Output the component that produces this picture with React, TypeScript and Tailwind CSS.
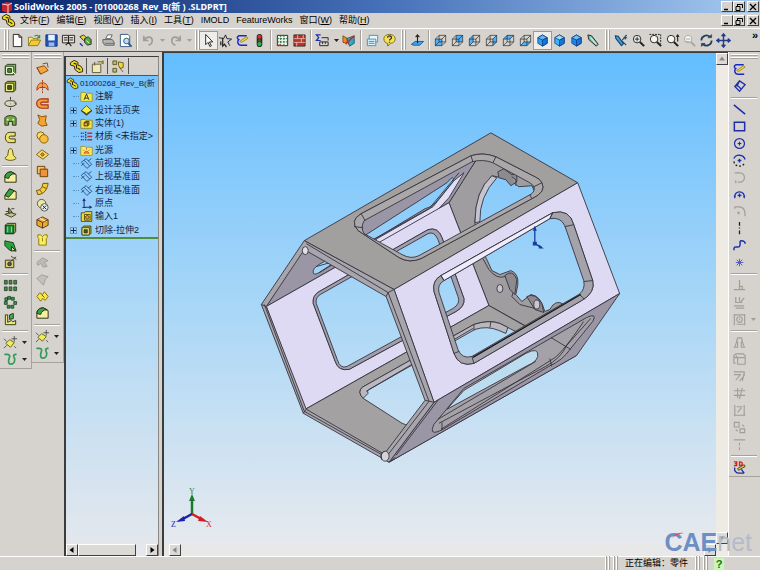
import React from 'react'

interface IconProps {
  name: string
}

interface ToolButtonProps {
  name: string
  pressed?: boolean
}

interface TreeItem {
  label: string
  icon: string
  expandable?: boolean
}

const B = '#1c2fa8'
const K = '#222222'
const G = '#a19e98'

// Wire cube shared by the standard view icons
const Cube = ({ face }: { face: string }) => (
  <g stroke="#222" fill="none">
    <path d={face} fill="#4db2ff" stroke="none" />
    <path d="M2.5 6.5h7v7h-7zM6.5 2.5h7v7h-7zM2.5 6.5l4-4M9.5 6.5l4-4M9.5 13.5l4-4M2.5 13.5l4-4" strokeWidth=".7" />
  </g>
)

const Solid = ({ top, front }: { top: string; front: string }) => (
  <g stroke="#123c7c" strokeWidth=".8">
    <path d="M3 5l5-3 5 3v6l-5 3-5-3z" fill={front} />
    <path d="M3 5l5-3 5 3-5 2.500z" fill={top} />
    <path d="M8 7.500l5-2.500v6l-5 3z" fill="#1576d8" />
  </g>
)

const Lens = ({ color = K, children }: { color?: string; children?: React.ReactNode }) => (
  <g fill="none" stroke={color}>
    <circle cx="6.500" cy="6.500" r="4" fill="#f4f6f6" />
    <path d="M9.500 9.500l4.500 4.500" strokeWidth="2.200" />
    {children}
  </g>
)

const ICONS: Record<string, React.ReactNode> = {
  new: <path d="M3.500 1.500h6l3 3v10h-9zM9.500 1.500v3h3" fill="#fff" stroke={K} />,
  open: (
    <g stroke="#7a6a10" strokeWidth=".8">
      <path d="M1.500 13.500v-9h4l1 1.500h5v2" fill="#f5e87a" />
      <path d="M1.500 13.500l3-6h10l-3 6z" fill="#f6c92e" />
      <path d="M8 3.500c2-2 4-1 5 1M13.500 2v3h-3" fill="none" stroke="#2d9a2d" strokeWidth="1.200" />
    </g>
  ),
  save: (
    <g>
      <path d="M2 2h12v12H2z" fill="#1d55b8" stroke="#133a80" />
      <path d="M4.500 2h7v6h-7z" fill="#e8f1ff" />
      <path d="M5 10h6v4H5z" fill="#9db8e0" />
    </g>
  ),
  drawing: (
    <g fill="none" stroke={K}>
      <path d="M1.500 2.500h13v8h-13z" fill="#e9e6df" />
      <path d="M3 5h4M9 5h4M3 7.500h4M9 7.500h4M8 3v7M5 13l3-3 3 4" strokeWidth="1.200" />
    </g>
  ),
  assembly: (
    <g stroke={K} strokeWidth=".9">
      <path d="M2 4l4-2 3 3-3 3z" fill="#e8d336" />
      <path d="M7 6l4-2 3 3v5l-4 1-3-3z" fill="#4fae3e" />
      <path d="M9 8l3 3" stroke="#fff" />
      <path d="M2 11l3 3" stroke={B} strokeWidth="1.500" />
    </g>
  ),
  print: (
    <g stroke="#555" strokeWidth=".9">
      <path d="M5 6l2-4h5l-2 4z" fill="#fff" />
      <path d="M2 7h10l2 3v3H4l-2-3z" fill="#b8b9b5" />
      <path d="M4 11h10" stroke="#3d6fa8" />
    </g>
  ),
  preview: (
    <g stroke="#355a80">
      <path d="M2.500 1.500h8l2 2v11h-10z" fill="#fff" />
      <circle cx="9" cy="8.500" r="3" fill="#b8e0f0" />
      <path d="M11 11l3.500 3.500" strokeWidth="2" />
    </g>
  ),
  undo: <path d="M3 3v5h5M3.500 7.500C6 3 12 3.500 12 8c0 3-2 4.500-4 5" fill="none" stroke={G} strokeWidth="1.800" />,
  redo: <path d="M13 3v5H8M12.500 7.500C10 3 4 3.500 4 8c0 3 2 4.500 4 5" fill="none" stroke={G} strokeWidth="1.800" />,
  pointer: <path d="M5 1.500v11l2.500-2.500 2 4.500 1.500-.8-2-4.200h3.500z" fill="#fff" stroke={K} />,
  selectOther: (
    <g fill="none" stroke={K}>
      <path d="M1 5l5 1 2-4 1.500 4 5 .5-4 3 2 4" />
      <path d="M5 5v9l2-2 2 3M3 9v4" strokeWidth="1.300" />
    </g>
  ),
  sketch: (
    <g fill="none" strokeWidth="1.600">
      <path d="M12.500 3H4c-2 1-2 3 0 4-2 2-1 6 2 6h7" stroke="#1b28c8" />
      <path d="M5 9l7-5 2 1.500-7 4.500z" fill="#f1d73b" stroke="#8d7614" strokeWidth=".8" />
    </g>
  ),
  traffic: (
    <g>
      <rect x="5" y="1" width="6" height="14" rx="3" fill="#2a2a2a" />
      <circle cx="8" cy="4" r="2.200" fill="#e02b22" />
      <circle cx="8" cy="8" r="1.300" fill="#5b5b30" />
      <circle cx="8" cy="11.800" r="2.200" fill="#27b54a" />
    </g>
  ),
  grid: (
    <g stroke="#27734b" fill="none">
      <path d="M2.500 2.500h11v11h-11z" fill="#eef1e8" stroke={K} />
      <path d="M2.500 6h11M2.500 9.500h11M6 2.500v11M9.500 2.500v11" strokeDasharray="2 1" />
      <path d="M3 13h3" stroke="#d22" strokeWidth="1.500" />
    </g>
  ),
  table: (
    <g>
      <path d="M2 2h12v12H2z" fill="#b7372e" stroke={K} strokeWidth=".8" />
      <path d="M2 6h12M2 10h12M6 2v4M10 6v4M5 10v4M12 2v4" stroke="#e5b0a2" />
    </g>
  ),
  measure: (
    <g fill="none" stroke={K}>
      <path d="M6 2H1.500l2.500 3-2.500 3H6" stroke={B} strokeWidth="1.300" />
      <path d="M5 9.500h9v4H5zM8 9.500v2M11 9.500v2M7 5h7v3" />
    </g>
  ),
  wizard: (
    <g strokeWidth=".9">
      <path d="M1 3l5 3-1 5-4-1z" fill="#f08b24" stroke="#84420b" />
      <path d="M5 6l8-3v8l-5 3z" fill="#34a8c4" stroke="#134f68" />
      <path d="M4 12l9-9" stroke="#d12222" strokeWidth="1.500" />
    </g>
  ),
  sheet: (
    <g stroke="#4b8db4">
      <path d="M4.500 2.500h9v7h-9z" fill="#eaf7ff" />
      <path d="M2.500 6.500h9v7h-9z" fill="#d8f0fa" />
      <path d="M4 9h6M4 11h6" />
    </g>
  ),
  help: (
    <g>
      <path d="M2 6c0-6 12-6 12 0 0 4-3 5-5 5l-3 3v-3c-2 0-4-2-4-5z" fill="#f5e356" stroke="#7c6a1c" />
      <path d="M6 5c0-3 5-2 4 .5C9.500 6.500 8 6.500 8 8M8 9.200v1.300" fill="none" stroke="#333" strokeWidth="1.400" />
    </g>
  ),
  normal: (
    <g fill="none">
      <path d="M1.500 12l4-3h9l-4 4h-7z" fill="#3fa3ee" stroke="#185f9d" />
      <path d="M8 11V2M6 4.500L8 2l2 2.500" stroke={K} strokeWidth="1.200" />
    </g>
  ),
  front: <Cube face="M2.500 6.500h7v7h-7z" />,
  back: <Cube face="M6.500 2.500h7v7h-7z" />,
  left: <Cube face="M2.500 6.500l4-4v7l-4 4z" />,
  right: <Cube face="M9.500 6.500l4-4v7l-4 4z" />,
  top: <Cube face="M2.500 6.500l4-4h7l-4 4z" />,
  bottom: <Cube face="M2.500 13.500l4-4h7l-4 4z" />,
  iso: <Solid top="#5bb8ff" front="#2d9df6" />,
  trimetric: <Solid top="#9adcff" front="#3db4f7" />,
  dimetric: <Solid top="#62c2ff" front="#1b86e8" />,
  section: (
    <g fill="none" stroke={K}>
      <path d="M2 2l4 1 7 9-2 2-8-7z" fill="#7fc4b0" />
      <path d="M5 5l6 7" stroke="#fff" />
    </g>
  ),
  viewSpec: (
    <g fill="none" stroke="#12466e" strokeWidth="1.200">
      <path d="M1.500 3l3 .5 5.500 8-2 2L2 6z" fill="#4d9bd0" />
      <path d="M13.500 2L8.500 8M10 5h4M12 3v4M9 9l4 4" />
    </g>
  ),
  zoomFit: <Lens><path d="M6.500 4v5M4 6.500h5" /></Lens>,
  zoomArea: <Lens><path d="M1.500 1.500h12v10" strokeDasharray="2 1" /></Lens>,
  zoomInOut: <Lens><path d="M13.500 2v7M12 4l1.500-2L15 4" strokeWidth="1.200" /></Lens>,
  zoomSel: <Lens color="#aaa7a1"><path d="M4 6.500h5M3 9h5" /></Lens>,
  rotate: (
    <g fill="none" stroke="#27405c" strokeWidth="1.900">
      <path d="M2.500 8c0-5 6-7 9-4M13.500 8c0 5-6 7-9 4" />
      <path d="M9.500 5h4V1.500zM6.500 11h-4v3.500z" fill="#27405c" strokeWidth=".5" />
    </g>
  ),
  pan: <path d="M8 1v14M1 8h14M6 3.500L8 1l2 2.500M6 12.500L8 15l2-2.500M3.500 6L1 8l2.500 2M12.500 6L15 8l-2.500 2" fill="none" stroke="#223c88" strokeWidth="1.500" />,

  // features
  extrude: (
    <g stroke="#26351a">
      <path d="M2.500 4.500l2-2h9v9l-2 2h-9z" fill="#8fca72" />
      <path d="M2.500 4.500h9v9h-9z" fill="#e7ecc0" />
      <path d="M5 7h4v4H5z" fill="#2fa043" />
      <path d="M10 10l3 3" stroke="#fff" />
    </g>
  ),
  cut: (
    <g stroke="#3a3510">
      <path d="M2.500 4.500l2-2h9v9l-2 2h-9z" fill="#9fb34c" />
      <path d="M2.500 4.500h9v9h-9z" fill="#efe98a" />
      <path d="M5 7h4v4H5z" fill="#3b5a1c" />
    </g>
  ),
  revolve: (
    <g fill="none" stroke="#333">
      <path d="M8 1v14" strokeDasharray="3 1" />
      <path d="M2 9c0-4 3-4 6-4s6 0 6 4l-2-2M14 9c-3 3-9 3-12 0" fill="#dcd9b4" />
    </g>
  ),
  revCut: (
    <g stroke="#26351a">
      <path d="M2 5c2-3 10-3 12 0v8h-4V9H6v4H2z" fill="#6fa549" />
      <path d="M4 7h2M10 7h2" stroke="#f6ee8c" strokeWidth="2" />
    </g>
  ),
  sweep: <path d="M13 2.500H7c-6 0-6 11 0 11h6v-4H8c-2 0-2-3 0-3h5z" fill="#efe469" stroke="#3a3510" />,
  loft: <path d="M6 3c1-1.500 3-1.500 4 0l1 6 3 3c-2 3-10 3-12 0l3-3z" fill="#f1e96c" stroke="#5a5210" />,
  fillet: (
    <g stroke="#2b2a10">
      <path d="M2 8c0-4 3-6 7-6l5 3v8H2z" fill="#f4f0a0" />
      <path d="M2 8c0-4 3-6 7-6l4 2c-4 0-6 2-7 5z" fill="#36a54a" />
    </g>
  ),
  chamfer: (
    <g stroke="#2b2a10">
      <path d="M2 9l5-7 7 3v8H2z" fill="#f4f0a0" />
      <path d="M2 9l5-7 5 2-6 7z" fill="#36a54a" />
    </g>
  ),
  rib: (
    <g stroke="#3a3a2a">
      <path d="M2 11l6-2 6 2-5 3z" fill="#c9c58c" />
      <path d="M6 10V4l4 5z" fill="#7ba657" />
      <path d="M3 8h3M9 5h3" />
    </g>
  ),
  shell: (
    <g stroke="#173b1d">
      <path d="M2.500 4.500l2-2h9v9l-2 2h-9z" fill="#a9c36a" />
      <path d="M2.500 4.500h9v9h-9z" fill="#1f8a3c" />
      <path d="M5 6v6M9 6v6" stroke="#a6dc7c" />
    </g>
  ),
  draft: (
    <g stroke="#173b1d">
      <path d="M2 3l9 2 3 9-7-1-5-5z" fill="#27a344" />
      <path d="M9 9l4 4-4 1z" fill="#f3ca8a" />
    </g>
  ),
  hole: (
    <g stroke="#3c3a1a">
      <path d="M2.500 5.500h9v8h-9z" fill="#d9cf7c" />
      <circle cx="7" cy="9.500" r="2" fill="#555" />
      <path d="M8 7l6-5M11 2l3 3M9 1l1 2" />
    </g>
  ),
  pattern: (
    <g fill="#4f8a4c" stroke="#1c3c1c" strokeWidth=".8">
      <path d="M1.500 2.500h3v4h-3zM6.500 2.500h3v4h-3zM11.500 2.500h3v4h-3zM1.500 9.500h3v4h-3zM6.500 9.500h3v4h-3zM11.500 9.500h3v4h-3z" />
    </g>
  ),
  circular: (
    <g fill="#3c9950" stroke="#173b1d" strokeWidth=".8">
      <path d="M5 1.500h3v3H5zM9 2.500h3v3H9zM11.500 7h3v3h-3zM8.500 11h3v3h-3zM4.500 11h3v3h-3zM1.500 7h3v3h-3zM2 3h3v3H2z" />
    </g>
  ),
  mirror: (
    <g stroke="#2c3a17">
      <path d="M2.500 3v10.500h11V9l-3 1.500L9 9l-4 2V3z" fill="#f0e47a" />
      <path d="M7 8V3l4-1.500V7z" fill="#3fae5a" />
    </g>
  ),
  refGeom: (
    <g stroke="#5a5a10" strokeWidth=".9">
      <path d="M3 9l4-4 5 3-4 5z" fill="#f1ee55" />
      <path d="M1 4l3 3M1 14l3-3M12 12l2 2M12 1v6M9 4h6" stroke="#444" />
    </g>
  ),
  curve: <path d="M1.500 2.500h3c3 0 3 2 2 4.500s-1 6 2 6 4-3 4-5-2-3-1-4.500 2-1 3-1" fill="none" stroke="#2f9a5a" strokeWidth="1.800" />,
  surfExtrude: (
    <g stroke="#8a4a0a">
      <path d="M2 6l8-2 4 5-8 4z" fill="#f6a63c" />
      <path d="M8 2l5-1 1 5M2 6l4 7" fill="none" />
    </g>
  ),
  surfRevolve: (
    <g stroke="#a3340c">
      <path d="M2 12C2 6 5 4 8 4s6 2 6 8l-3-3H5z" fill="#f7a24c" />
      <path d="M8 1v14" strokeDasharray="2 1" />
    </g>
  ),
  surfSweep: <path d="M14 3H7C0 3 0 13 7 13h7v-3.500H8c-2.500 0-2.500-3 0-3h6z" fill="#f6a03c" stroke="#a82c10" strokeWidth="1.200" />,
  surfLoft: <path d="M3 2l4 2 5-1-1 6 2 4-6 1-4-3 2-4z" fill="#f5a52a" stroke="#8d4c0b" />,
  surfOffset: (
    <g stroke="#8a5c0a">
      <circle cx="6" cy="6" r="4" fill="#f9dd6a" />
      <circle cx="9.500" cy="9.500" r="4.500" fill="#f7bf3e" />
    </g>
  ),
  surfPlanar: (
    <g stroke="#7c5c12">
      <path d="M1.500 8l6-5 7 5-6 5z" fill="#f3e066" />
      <path d="M6 8l2-2 2 2-2 2z" fill="#e07e20" />
    </g>
  ),
  surfKnit: (
    <g stroke="#6d3d08">
      <path d="M2.500 2.500h8v8h-8z" fill="#f6c66c" />
      <path d="M5.500 5.500h8v8h-8z" fill="#ee9438" />
    </g>
  ),
  surfExtend: <path d="M1.500 10c4 0 6-2 7-7.500h5.500C13 9 10 14 3 14.500zM5 9.500l2.500 3M8 6l4 2" fill="#f2cf3e" stroke="#6d4d08" />,
  surfTrim: (
    <g stroke="#555">
      <circle cx="7" cy="6" r="4.500" fill="#f0e9a0" />
      <circle cx="10" cy="10" r="4" fill="#e8efe8" />
      <path d="M8 8l4 4M12 8l-4 4" stroke={K} />
    </g>
  ),
  surfBox: (
    <g stroke="#5b3d08">
      <path d="M2 5l6-3 6 3v6l-6 3-6-3z" fill="#e9a934" />
      <path d="M2 5l6 3 6-3M8 8v6" fill="none" />
      <path d="M5 3.500l6 3" stroke="#fff" />
    </g>
  ),
  surfThick: <path d="M3 3h3l2 2 2-2h3v3l-1 1v7H4V7L3 6zM8 6v4" fill="#f8ef5a" stroke="#8d7a10" />,
  fill: <path d="M2 8l6-5 6 3-4 2 3 4-4 1-3-4-3 2z" fill="#bdbab4" stroke={G} />,
  mid: <path d="M2 7l5-4 7 2-3 3-2 6-4-4z" fill="#c3c0ba" stroke={G} />,
  freeform: (
    <g stroke="#86700b">
      <path d="M2 8l3-4 3 2 2-3 4 5-3 4-3-2-2 3z" fill="#f6e945" />
      <path d="M7 6l3 3" stroke="#c21" />
    </g>
  ),

  // sketch tools
  dimension: (
    <g fill="none" stroke={B} strokeWidth="1.400">
      <path d="M8 2l6 4-6 7-5-5zM5 6l5 5M8 2L5 8" />
    </g>
  ),
  line: <path d="M2 3l12 10" stroke={B} strokeWidth="1.600" />,
  rect: <path d="M2.500 3.500h11v9h-11z" fill="none" stroke={B} strokeWidth="1.600" />,
  circle: (
    <g fill="none" stroke={B} strokeWidth="1.300">
      <circle cx="8" cy="8" r="5.300" />
      <path d="M8 6v4M6 8h4" />
    </g>
  ),
  arc: (
    <g fill="none" stroke={K} strokeWidth="1.400">
      <path d="M2 6c2-5 10-5 12 1" stroke={B} />
      <path d="M2 9c1 6 9 7 12 1" strokeDasharray="2 2" />
      <path d="M8 6v4M6 8h4" stroke={B} />
    </g>
  ),
  tangentArc: <path d="M3 3h5c7 0 7 10 0 10H6M4 11v3" fill="none" stroke={G} strokeWidth="1.300" />,
  threeArc: <path d="M3 12C1 3 15 3 13 12M8 7v4M6 9h4M2 10h2M12 10h2" fill="none" stroke={B} strokeWidth="1.400" />,
  fillet2: <path d="M3 3h4c6 0 7 4 7 10M3 3v2M7 8v3M5.500 9.500h3" fill="none" stroke={G} strokeWidth="1.300" />,
  center: <path d="M8 1v14" stroke={K} strokeWidth="1.400" strokeDasharray="4 2 1 2" />,
  spline: <path d="M2 13c0-6 4-2 6-4s-1-6 2-6 4 2 4 3" fill="none" stroke={B} strokeWidth="1.600" />,
  point: <path d="M8 4v8M4 8h8M5 5l6 6M11 5l-6 6" stroke="#4a55d8" />,
  perp: <path d="M8 2v10M2 12.500h12M8 9h3v3" fill="none" stroke={G} strokeWidth="1.300" />,
  relation: <path d="M4 2v6h7M8 2v5M13 3l-4 5M2 11.500h11M4 14h9" fill="none" stroke={G} strokeWidth="1.300" />,
  convert: (
    <g fill="none" stroke={G} strokeWidth="1.200">
      <path d="M2.500 2v12M13.500 2v12M2 3h12M5 13h8" />
      <circle cx="8" cy="8" r="3" />
      <path d="M8 7v2" />
    </g>
  ),
  mirror2: <path d="M2 13h4V8L5 6l1-3h4l1 3-1 2v5h4M3 13l2-6M13 13l-2-6" fill="none" stroke={G} strokeWidth="1.200" />,
  convert2: <path d="M2 4l2-2h8l2 2v9H6V6H2zM6 6l-2-2M6 6h8M2 6v6h2" fill="none" stroke={G} strokeWidth="1.200" />,
  offset: <path d="M2 3h11v4l-5 6M2 6h7L4 12M13 4l-2 9" fill="none" stroke={G} strokeWidth="1.200" />,
  trim: <path d="M2 5h12M2 10h12M6 2v11M11 2L8 14" fill="none" stroke={G} strokeWidth="1.200" />,
  constr: <path d="M3 2v12M13 2v12M2 13h12M6 10l4-5M5 4h6" fill="none" stroke={G} strokeWidth="1.200" />,
  step: <path d="M2.500 2.500h5v5h-5zM8.500 9.500h5v4h-5zM4 10l2 2M11 5l2 2" fill="none" stroke={G} strokeWidth="1.200" />,
  align: <path d="M2 3h12M8 6v3M8 11v3" fill="none" stroke={G} strokeWidth="1.200" />,
  sketch3d: (
    <g fill="none" strokeWidth="1.400">
      <path d="M2 2h3v2H3h2v2H2M8 2v4c4 0 4-4 0-4z" stroke="#d22020" />
      <path d="M6 9l7-4 1 2-7 4z" fill="#f0c63b" stroke={K} strokeWidth=".8" />
      <path d="M3 8c-1 3 1 6 4 6h6M10 10l3 4" stroke="#1d2ba8" />
    </g>
  ),

  // feature tree
  part: (
    <g stroke="#2b2508">
      <path d="M1.500 4l4-2.500 4 2v3l3 1 2 3v3l-4 1-4-3-1-4-4-1z" fill="#efd92e" />
      <path d="M5 4.500l3 1M9 9.500l3 2M8 6v4" fill="none" strokeWidth="1.200" />
    </g>
  ),
  property: (
    <g stroke="#5b5a3c">
      <path d="M2.500 5.500h9v9h-9z" fill="#f0e8b8" />
      <path d="M5 3v4M8 3h4l2-1v3l-2-1" fill="#f4d94a" />
    </g>
  ),
  config: (
    <g stroke="#5b4e12" strokeWidth=".9">
      <path d="M2 2h4v4H2zM2 10h4v4H2z" fill="#a8c178" />
      <path d="M8 3l5 1v5l-3 1-2-3zM9 9l4 5" fill="#efd73b" />
    </g>
  ),
  annotation: (
    <g>
      <path d="M1 3h5l1 1h8v10H1z" fill="#f6ea4e" stroke="#9d8d1c" />
      <path d="M5 12l3-7 3 7M6 10h4" fill="none" stroke="#333" strokeWidth="1.200" />
    </g>
  ),
  binder: (
    <g stroke="#4a4510">
      <path d="M1.500 8L8 2l6.500 6L8 12z" fill="#f7ee4a" />
      <path d="M1.500 8L8 13.500 14.500 8" fill="none" strokeWidth="1.500" />
    </g>
  ),
  bodies: (
    <g>
      <path d="M1 3h5l1 1h8v10H1z" fill="#f6e23e" stroke="#8d7c1c" />
      <path d="M5 7l2-1.500h4v4L9.500 11H5zM5 7h4.500v4" fill="#d9a93c" stroke="#3a2a0a" />
    </g>
  ),
  material: (
    <g strokeWidth="1.700">
      <path d="M1 4h4M1 8h4M1 12h4" stroke="#3a3ab8" strokeDasharray="2 1" />
      <path d="M7 2v12" stroke="#444" strokeDasharray="2 1" />
      <path d="M9 4h6M9 8h6M9 12h6" stroke="#b82f3f" />
    </g>
  ),
  light: (
    <g>
      <path d="M1 3h5l1 1h8v10H1z" fill="#f8ee58" stroke="#9d8d1c" />
      <path d="M5 12c0-4 6-4 6 0M8 5v2M4 7l1.500 1.500M12 7l-1.500 1.500" fill="#ee7f2c" stroke="#c44" />
    </g>
  ),
  plane: <path d="M1.500 6.500l6-4.500 7 7-6 5zM5 4l7 7M1.500 10.500l4-3M10 5l4-3" fill="none" stroke="#2f5c90" strokeWidth="1.200" />,
  origin: <path d="M5 13V3M3.500 5L5 2.500 6.500 5M5 12.500h9M11.500 11l2.500 1.500-2.500 1.500M3 13h4" fill="none" stroke="#2a2f80" strokeWidth="1.300" />,
  imported: (
    <g stroke="#40390a">
      <path d="M1.500 3.500h4l1-1.500h8v12h-13z" fill="#efdc3a" />
      <path d="M5.500 5.500h7v7h-7z" fill="#f6e98a" />
      <circle cx="9" cy="9" r="2.300" fill="#e89a2c" />
    </g>
  ),
}

const Icon = ({ name }: IconProps) => (
  <svg viewBox="0 0 16 16" className="w-[15px] h-[15px] shrink-0" aria-hidden="true">
    {ICONS[name]}
  </svg>
)

const TreeIcon = ({ name }: IconProps) => (
  <svg viewBox="0 0 16 16" className="w-[13px] h-[13px] shrink-0" aria-hidden="true">
    {ICONS[name]}
  </svg>
)

const ToolButton = ({ name, pressed = false }: ToolButtonProps) => (
  <button
    type="button"
    aria-label={name}
    className={
      pressed
        ? 'flex w-[17px] h-[17px] shrink-0 items-center justify-center bg-[#efedea] outline outline-[#9a97a0]'
        : 'flex w-[17px] h-[17px] shrink-0 items-center justify-center'
    }
  >
    <Icon name={name} />
  </button>
)

const Drop = ({ muted = false }: { muted?: boolean }) => (
  <button type="button" aria-label="more" className="flex w-[10px] h-[17px] shrink-0 items-center justify-center">
    <svg viewBox="0 0 5 3" className="w-[5px] h-[3px]">
      <path d="M0 0h5L2.500 3z" fill={muted ? G : K} />
    </svg>
  </button>
)

const Sep = () => (
  <div className="flex w-[6px] shrink-0 justify-center">
    <div className="w-[2px] h-5 border-l border-[#a5a29c] border-r border-r-white" />
  </div>
)

const Grip = ({ wide = false }: { wide?: boolean }) => (
  <div className={wide ? 'flex w-[11px] shrink-0 justify-center gap-px' : 'flex w-[6px] shrink-0 justify-center gap-px'}>
    <div className="w-[2px] h-5 border-l border-white border-r border-r-[#a5a29c]" />
    <div className="w-[2px] h-5 border-l border-white border-r border-r-[#a5a29c]" />
  </div>
)

const Tools = ({ names }: { names: string[] }) => (
  <>
    {names.map((name, index) => (
      <ToolButton key={index} name={name} />
    ))}
  </>
)

// Vertical toolbar, groups divided by etched lines
const SideBar = ({ groups, drops }: { groups: string[][]; drops: string[] }) => (
  <div className="w-8 shrink-0 border-r border-b border-[#a5a29c] pt-[2px]">
    <div className="mx-[2px] h-[7px]">
      <div className="h-[2px] border-t border-white border-b border-b-[#a5a29c]" />
      <div className="mt-px h-[2px] border-t border-white border-b border-b-[#a5a29c]" />
    </div>
    {groups.map((group, index) => (
      <div key={index} className="pl-[2px]">
        {index > 0 && <div className="my-[2px] mr-[3px] h-[2px] border-t border-[#a5a29c] border-b border-b-white" />}
        {group.map((name, i) => (
          <div key={i} className="flex">
            <ToolButton name={name} />
            {drops.includes(name) && <Drop muted={name === 'convert'} />}
          </div>
        ))}
      </div>
    ))}
  </div>
)

const WindowButtons = () => (
  <div className="ml-auto flex">
    <button type="button" aria-label="Minimize" className={winButton}>
      <svg viewBox="0 0 8 8" className="w-2 h-2"><path d="M1 6.500h4" stroke="#000" strokeWidth="1.500" /></svg>
    </button>
    <button type="button" aria-label="Restore" className={winButton}>
      <svg viewBox="0 0 8 8" className="w-2 h-2"><path d="M2.500 1.500h5v3.500M2.500 1v2M1 3.500h4v4H1z" fill="none" stroke="#000" /></svg>
    </button>
    <button type="button" aria-label="Close" className={winButton + ' ml-[2px]'}>
      <svg viewBox="0 0 8 8" className="w-2 h-2"><path d="M1 1l6 6M7 1L1 7" stroke="#000" strokeWidth="1.300" /></svg>
    </button>
  </div>
)

const winButton =
  'flex w-3 h-[11px] items-center justify-center bg-[#d6d3ce] border border-white border-r-[#404040] border-b-[#404040]'
const scrollButton =
  'flex w-3 h-3 shrink-0 items-center justify-center bg-[#dcdad6] border border-white border-r-[#404040] border-b-[#404040]'

const Arrow = ({ d, color = '#000' }: { d: string; color?: string }) => (
  <svg viewBox="0 0 8 8" className="w-2 h-2"><path d={d} fill={color} /></svg>
)

const MENUS = [
  ['文件', 'F'],
  ['编辑', 'E'],
  ['视图', 'V'],
  ['插入', 'I'],
  ['工具', 'T'],
  ['IMOLD', ''],
  ['FeatureWorks', ''],
  ['窗口', 'W'],
  ['帮助', 'H'],
]

const TREE: TreeItem[] = [
  { label: '注解', icon: 'annotation' },
  { label: '设计活页夹', icon: 'binder', expandable: true },
  { label: '实体(1)', icon: 'bodies', expandable: true },
  { label: '材质 <未指定>', icon: 'material' },
  { label: '光源', icon: 'light', expandable: true },
  { label: '前视基准面', icon: 'plane' },
  { label: '上视基准面', icon: 'plane' },
  { label: '右视基准面', icon: 'plane' },
  { label: '原点', icon: 'origin' },
  { label: '输入1', icon: 'imported' },
  { label: '切除-拉伸2', icon: 'cut', expandable: true },
]

const FEATURES = [
  ['extrude', 'cut', 'revolve', 'revCut', 'sweep', 'loft'],
  ['fillet', 'chamfer', 'rib', 'shell', 'draft', 'hole'],
  ['pattern', 'circular', 'mirror'],
  ['refGeom', 'curve'],
]

const SURFACES = [
  ['surfExtrude', 'surfRevolve', 'surfSweep', 'surfLoft', 'surfOffset', 'surfPlanar', 'surfKnit', 'surfExtend', 'surfTrim', 'surfBox', 'surfThick'],
  ['fill', 'mid', 'freeform', 'fillet'],
  ['refGeom', 'curve'],
]

const SKETCH = [
  ['sketch', 'dimension'],
  ['line', 'rect', 'circle', 'arc', 'tangentArc', 'threeArc', 'fillet2', 'center', 'spline', 'point'],
  ['perp', 'relation', 'convert'],
  ['mirror2', 'convert2', 'offset', 'trim', 'constr', 'step', 'align'],
  ['sketch3d'],
]

const Model = () => (
  <svg
    viewBox="163 52 552 504"
    className="absolute inset-0 w-full h-full"
    stroke="#37343f"
    strokeWidth=".9"
    strokeLinejoin="round"
    fillRule="evenodd"
  >
    {/* back plate */}
    <path
      fill="#9f9d9f"
      d="M448 202L490 136L576 183L617 292L576 354L488 305ZM491 175Q474 190 474 222Q476 244 486 259L491 270L499 274L510 270Q518 273 517 284L515 294L521 301L530 294Q540 295 544 311L549 309Q555 298 563 304L596 286L560 200L535 193L531 185L518 186L507 178Z"
    />
    <path fill="#c6c4cf" d="M491 175Q474 190 474 222L479 221Q478 196 496 177Z" />
    <path fill="none" d="M482 258L488 269Q496 279 504 276L514 287L511 296L519 304L538 309" />
    <path fill="#8d8b90" d="M497 171l6-3 8 6 5-1v8l-6 4-5-6-7-2zM511 176l4 3v6" />
    <path fill="#8d8b90" d="M504 275Q512 268 516 279L514 294L509 289ZM526 296Q535 292 541 303L543 312L534 309Z" />
    <ellipse cx="499" cy="288" rx="3" ry="4" fill="#c9c8cf" />
    <ellipse cx="536" cy="304" rx="3" ry="4.500" fill="#c9c8cf" />

    {/* upper left wall */}
    <path
      fill="#9a96a6"
      d="M303 246L490 136L448 202L265 306ZM312 270Q313 266 323 261L446 182Q454 172 452 181L437 199Q432 206 424 208L318 272Q311 276 312 270Z"
    />
    <path fill="#e2def6" d="M376 238L432 206L453 180L463 172L448 197L434 212L366 250Z" />
    <path fill="none" d="M370 240L428 208L458 172M318 272L330 264M315 266L329 262" />

    {/* left wall */}
    <path
      fill="#dedaf3"
      d="M265 306L448 202L488 305L304 409ZM318 291Q311 295 312 303L334 361Q337 371 348 369L455 311Q464 306 463 298L441 237Q437 226 427 229Z"
    />
    <path
      fill="#a19fae"
      d="M318 291Q311 295 312 303L334 361Q337 371 348 369L455 311Q464 306 463 298L441 237Q437 226 427 229ZM319 294L427 233Q433 230 437 239L457 296Q460 303 452 308L346 366Q339 369 336 359L315 303Q314 297 319 294Z"
    />

    {/* floor */}
    <path
      fill="#a3a1a2"
      d="M304 409L488 305L576 355L388 462ZM361 387Q356 392 362 398L401 423Q408 427 418 421L540 352Q546 347 540 344L499 323Q488 319 473 324Z"
    />
    <path fill="#bab8bf" d="M361 387Q356 392 362 398L367 393Q365 390 370 388L474 329Q486 325 498 330L505 333L507 327L499 323Q488 319 473 324Z" />
    <path fill="none" d="M365 391L472 328M473 324v6M490 321l-1 6" />

    {/* top face */}
    <path
      fill="#a2a09f"
      d="M303 240L490 132L577 182L393 289ZM360 213Q348 220 357 230L398 257Q408 263 420 258L531 198Q546 191 541 182Q539 178 534 176L495 156Q482 151 470 155Z"
    />
    <path
      fill="#aaa8a9"
      d="M360 213Q348 220 357 230L398 257Q408 263 420 258L531 198Q546 191 541 182Q539 178 534 176L495 156Q482 151 470 155ZM363 220L471 161Q482 158 492 162L529 182Q537 187 531 193L418 255Q410 259 401 254L363 233Q359 227 363 220Z"
    />
    <path fill="none" d="M360 213l4 7M470 155l2 6M495 156l-3 6M541 182l-8 4M531 198l-2-4M353 226l9 1" />

    {/* right face */}
    <path
      fill="#dedaf4"
      d="M393 289L577 182L619 293L433 402ZM440 275Q431 280 433 291L453 353Q458 367 473 363L581 300Q595 292 592 280L573 224Q569 208 552 212Z"
    />
    <path
      fill="#a4a2aa"
      d="M440 275Q431 280 433 291L453 353Q458 367 473 363L581 300Q595 292 592 280L573 224Q569 208 552 212ZM443 280L549 218Q560 216 564 225L583 280Q585 289 578 294L471 356Q461 359 457 349L438 292Q436 284 443 280Z"
    />
    <path fill="#efecfb" d="M440 275L552 212L549 218L443 280Z" />
    <path fill="none" d="M440 275l3 5M552 212l-3 6M573 224l-9 2M592 280l-9 1M584 299l-5-5M473 363l-2-7M453 353l5-2" />
    <path fill="none" d="M472 357L580 294" stroke="#17151c" strokeWidth="1.300" />

    {/* lower right face */}
    <path fill="#9a96a5" d="M433 402L619 293L576 355L388 462Z" />
    <path fill="#a4a2a8" d="M433 424L463 388L586 317Q597 312 592 321L570 348Q562 360 548 366L442 429Q427 437 433 424Z" />
    <path fill="#bcdcf0" d="M446 409L463 390L525 353Q538 346 537 356Q535 362 527 365Z" />
    <path fill="none" d="M438 423L545 366Q560 358 566 345L590 318M437 419L535 361M440 429L553 358Q562 352 583 321M550 337l20 12M549 358l2 8M441 422v8" />

    {/* front rim */}
    <path
      fill="#a8a6ad"
      d="M303 240L393 289L433 402L388 462L302 413L260 304ZM303 249L265 306L305 409L383 454L424 400L385 296Z"
    />
    <path fill="none" d="M305 243L387 292L428 401L385 457M387 292l6-3M424 400l9 2M263 304l40 107 84 47M385 296l2-4M260 304l5 2M302 413l3-4" />
    <path fill="none" d="M395 455L437 400" />
    <ellipse cx="304" cy="250" rx="3" ry="4" fill="#e2e0e6" />
    <ellipse cx="384" cy="456" rx="4" ry="5" fill="#d5d3d8" />
    <path fill="none" d="M381 460q-3-5 2-9M390 461l4-4" />

    {/* part origin */}
    <path d="M534 243V226M534 243l7 4" stroke="#1b3c9b" strokeWidth="1.300" />
    <path d="M532 230l2-5 2 5zM538 244l5 4-5 0zM532 241h4v4h-4z" fill="#1b3c9b" stroke="none" />
  </svg>
)

const Triad = () => (
  <svg viewBox="0 0 44 44" className="absolute bottom-[13px] left-[6px] w-11 h-11">
    <path d="M22 27V12" stroke="#1b7a2b" strokeWidth="2.500" />
    <path d="M19 14l3-7 3 7z" fill="#1b7a2b" />
    <path d="M22 27l-11 6" stroke="#1a22b0" strokeWidth="2.500" />
    <path d="M14 29l-8 6 9-1z" fill="#1a22b0" />
    <path d="M22 27l11 6" stroke="#cf1f24" strokeWidth="2.500" />
    <path d="M30 29l8 6-10-1z" fill="#cf1f24" />
    <g fontFamily="Liberation Serif, serif" fontSize="8">
      <text x="19" y="7" fill="#2b8a3c">Y</text>
      <text x="1" y="40" fill="#1a22b0">Z</text>
      <text x="36" y="40" fill="#cf1f24">X</text>
    </g>
  </svg>
)

const FeatureTree = () => (
  <div className="flex w-[95px] shrink-0 flex-col border-l-2 border-[#3c3c3c] mt-1 border-t border-r border-r-[#8a8884]">
    <div className="flex h-[19px] shrink-0 items-center border-b border-[#55534f]">
      {['part', 'property', 'config'].map((name) => (
        <button key={name} type="button" aria-label={name} className="flex h-4 w-[21px] items-center justify-center border-r border-[#55534f]">
          <Icon name={name} />
        </button>
      ))}
    </div>
    <div className="flex flex-1 flex-col overflow-hidden bg-linear-to-b from-[#74c3ff] via-[#b0d9f6] to-[#e6e8ec]">
      <ul className="flex h-[163px] shrink-0 flex-col whitespace-nowrap border-b-2 border-[#4f8f3c] pt-px text-[#16223c]">
        <li className="flex flex-1 items-center gap-px text-[8px]">
          <TreeIcon name="part" />
          01000268_Rev_B(新
        </li>
        {TREE.map((item) => (
          <li key={item.label} className="flex flex-1 items-center">
            <div className="flex w-[14px] shrink-0 items-center justify-center">
              {item.expandable ? (
                <button type="button" aria-label={'+ ' + item.label} className="flex w-[7px] h-[7px] items-center justify-center border border-[#6f98bc]">
                  <svg viewBox="0 0 5 5" className="w-[5px] h-[5px]"><path d="M0 2.500h5M2.500 0v5" stroke="#12305c" /></svg>
                </button>
              ) : (
                <div className="ml-[6px] w-[6px] border-t border-dotted border-[#5f93bf]" />
              )}
            </div>
            <TreeIcon name={item.icon} />
            <span className="ml-[2px]">{item.label}</span>
          </li>
        ))}
      </ul>
      <div className="mt-auto flex h-3">
        <button type="button" aria-label="Left" className={scrollButton}><Arrow d="M5.500 1v6l-4-3z" /></button>
        <div className="w-[58px] border border-white border-r-[#404040] border-b-[#404040] bg-[#dcdad6]" />
        <button type="button" aria-label="Right" className={scrollButton + ' ml-auto'}><Arrow d="M2.500 1v6l4-3z" /></button>
      </div>
    </div>
  </div>
)

export default function App() {
  return (
    <div className="flex h-screen flex-col overflow-hidden bg-[#d6d3ce] font-['Liberation_Sans','Noto_Sans_CJK_SC',sans-serif] text-[9px] leading-[13px] text-black">
      {/* Title bar */}
      <header className="flex h-[13px] shrink-0 items-center gap-px bg-linear-to-r from-[#0a246a] via-[#4670b8] to-[#a6caf0] px-px text-white">
        <svg viewBox="0 0 12 12" className="w-3 h-3">
          <path d="M1 3l4-2 6 1v7l-4 3-6-2z" fill="#c3242b" />
          <path d="M1 3l6 1 4-2M7 4v8" stroke="#fff" fill="none" strokeWidth=".8" />
        </svg>
        <h1 className="font-['Noto_Sans','Noto_Sans_CJK_SC',sans-serif] font-bold">SolidWorks 2005 - [01000268_Rev_B(新 ) .SLDPRT]</h1>
        <WindowButtons />
      </header>

      {/* Menu */}
      <nav className="flex h-[15px] shrink-0 items-center px-px">
        <Icon name="part" />
        <div className="ml-1 flex gap-[7px]">
          {MENUS.map(([label, key]) => (
            <button key={label} type="button">
              {label}
              {key && <>(<u>{key}</u>)</>}
            </button>
          ))}
        </div>
        <WindowButtons />
      </nav>

      {/* Toolbar */}
      <div className="flex h-6 shrink-0 items-center overflow-hidden border-t border-b border-t-white border-b-[#55534f] pl-[3px]">
        <Grip />
        <Tools names={['new', 'open', 'save', 'drawing', 'assembly']} />
        <Sep />
        <Tools names={['print', 'preview']} />
        <Sep />
        <ToolButton name="undo" />
        <Drop muted />
        <ToolButton name="redo" />
        <Drop muted />
        <Grip />
        <ToolButton name="pointer" pressed />
        <Tools names={['selectOther', 'sketch', 'traffic']} />
        <Sep />
        <Tools names={['grid', 'table']} />
        <Sep />
        <ToolButton name="measure" />
        <Drop />
        <ToolButton name="wizard" />
        <Sep />
        <Tools names={['sheet', 'help']} />
        <Grip wide />
        <Tools names={['normal']} />
        <Sep />
        <Tools names={['front', 'back', 'left', 'right', 'top', 'bottom']} />
        <ToolButton name="iso" pressed />
        <Tools names={['trimetric', 'dimetric', 'section']} />
        <Grip wide />
        <Tools names={['viewSpec', 'zoomFit', 'zoomArea', 'zoomInOut', 'zoomSel', 'rotate', 'pan']} />
        <button type="button" className="ml-auto self-start pr-[2px] text-[11px] font-bold">»</button>
      </div>

      {/* Workspace */}
      <main className="flex min-h-0 flex-1">
        <div className="flex shrink-0 items-start">
          <SideBar groups={FEATURES} drops={['refGeom', 'curve']} />
          <SideBar groups={SURFACES} drops={['refGeom', 'curve']} />
        </div>
        <FeatureTree />
        <section className="relative ml-[3px] flex flex-1 border-l-2 border-t border-[#3c3c3c]">
          <div className="flex flex-1 flex-col">
            <div className="relative flex-1 bg-linear-to-b from-[#62bdff] via-[#a6d6f7] to-[#e6e9ee]">
              <Triad />
            </div>
            <div className="flex h-3 bg-[#e9e8e8] pl-[5px]">
              <button type="button" aria-label="Left" className={scrollButton}><Arrow d="M5.500 1v6l-4-3z" color="#8a8884" /></button>
              <button type="button" aria-label="Right" className={scrollButton + ' ml-auto'}><Arrow d="M2.500 1v6l4-3z" color="#8a8884" /></button>
            </div>
          </div>
          <div className="flex w-3 flex-col bg-[#eeebe4] pb-3">
            <button type="button" aria-label="Up" className={scrollButton}><Arrow d="M1 5.500h6l-3-4z" color="#8a8884" /></button>
            <button type="button" aria-label="Down" className={scrollButton + ' mt-auto'}><Arrow d="M1 2.500h6l-3 4z" color="#8a8884" /></button>
          </div>
          <div className="pointer-events-none absolute inset-y-0 left-0 right-3">
            <Model />
          </div>
        </section>
        <div className="relative w-8 shrink-0 border-l border-white">
          <SideBar groups={SKETCH} drops={['convert']} />
          <div className="absolute bottom-1 right-2 font-['Liberation_Sans',sans-serif] text-[25px] leading-5 font-bold text-[#6d8fc4]">
            CAE<span className="font-normal text-[#b3bccb]">net</span>
            <svg viewBox="0 0 12 6" className="absolute left-2 top-0 h-[6px] w-3"><path d="M0 6Q4 0 12 1 5 2 0 6z" fill="#e2504c" /></svg>
          </div>
        </div>
      </main>

      {/* Status bar */}
      <footer className="flex h-[14px] shrink-0 items-center justify-end gap-[2px] border-t border-white pr-9">
        <Grip />
        <Grip />
        <span className="mx-1">正在编辑：零件</span>
        <Grip />
        <Grip />
        <button type="button" className="ml-1 h-3 w-[10px] bg-[#c9f7b4] font-bold text-[11px] leading-3 text-[#1c6e1c]">?</button>
      </footer>
    </div>
  )
}
